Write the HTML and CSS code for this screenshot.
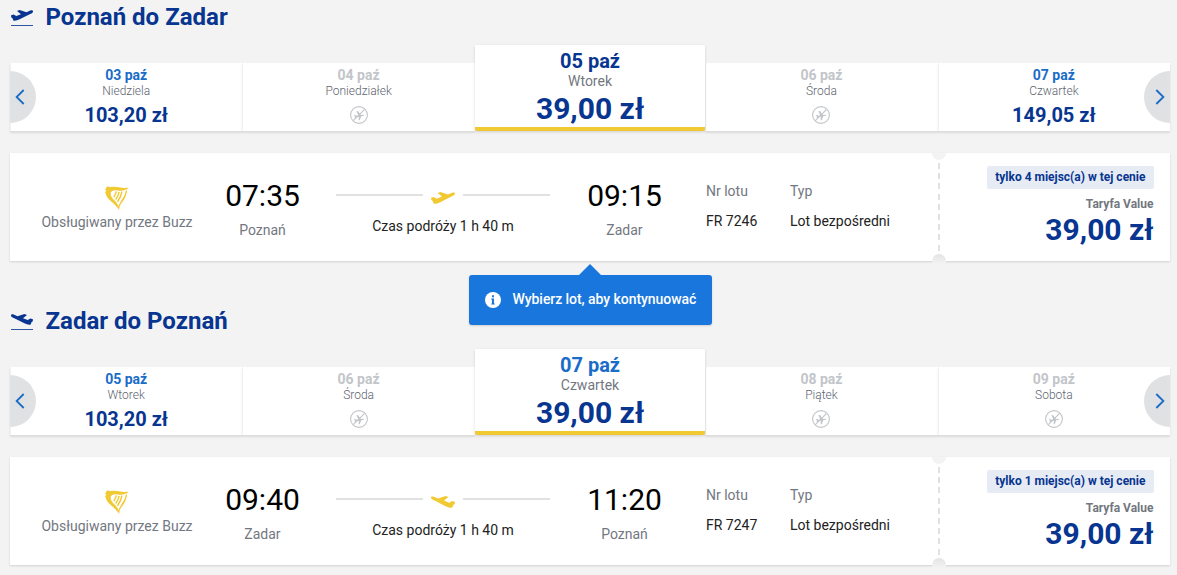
FILE: index.html
```
<!DOCTYPE html>
<html lang="pl">
<head>
  <meta charset="UTF-8">
  <meta name="viewport" content="width=device-width, initial-scale=1">
  <title>Wybierz lot</title>
  <link rel="stylesheet" href="styles.css">
</head>
<body>
  <!-- Wspólne ikony -->
  <svg class="icon-defs" width="0" height="0">
    <symbol id="plane" viewBox="0 0 22 11">
      <path d="M.1 5.300 2.600 4.600 5.300 6.100 10 4.200 6 1 8.600.1 15.500 2.300 19.300.6C20.900 0 22.200.5 22 1.700 21.900 2.800 20.300 3.500 18.700 4.200L8.600 9.300C6.400 10.400 3.600 11.300 2.300 10.400L1.500 8.200.2 7.200z"/>
    </symbol>
    <symbol id="no-flight" viewBox="0 0 18 18">
      <circle cx="9" cy="9" r="8.400" fill="none" stroke="#c2c5ca" stroke-width="1.100"/>
      <path d="M4 8.300 5 8.300 6 9.300H8.300L7 5H8.400L11 9.200 13.600 9.500 14 10 13.500 10.500 11 10.500 9 14.200H7.800L8.700 10.700 6 10.700 5 11.600H4.200L4.700 10z" fill="#c2c5ca" transform="rotate(-8 9 9)"/>
      <path d="M3.300 14.700 14.700 3.300" fill="none" stroke="#c2c5ca" stroke-width="1.100"/>
    </symbol>
    <symbol id="harp" viewBox="0 0 24 24">
      <path d="M1 2C1.500.5 3.800-.1 5 1.200 8 .2 11 .8 14 1.300 17 2.100 20.500 1.900 23.700 1.800 21.500 4 18 5.300 12.500 4.400 9 3.900 7 4.700 5.800 6.600 5.200 9.500 7 12.300 9.600 14.500 12 17 13.200 19 13.700 20.500 14 17 17.700 13.500 19.800 8.500L20.800 4.800 22.200 4.300C21.300 9.500 19.700 13.500 16.900 16.500 15 18.600 14.300 21 14.200 24 12 20.500 9 18 6 15.300 3 12.600.6 9.300.3 6.200L1.300 4.600.2 4z"/>
      <path d="M11.400 5.300Q10.800 8 8.800 11.200M14.200 5.800Q13.200 10 10.700 13.500M17 5.500Q16 11 12.500 15.800" fill="none" stroke="#f1c933" stroke-width="1.400"/>
    </symbol>
  </svg>

  <!-- Lot tam -->
  <section class="journey">
    <header class="journey-header">
      <span class="journey-icon"><svg class="plane"><use href="#plane"/></svg></span>
      <h2>Poznań do Zadar</h2>
    </header>

    <div class="carousel">
      <button class="arrow prev"><svg viewBox="0 0 10 16"><path d="M8.700 1 1.600 8l7.100 7"/></svg></button>
      <div class="day">
        <p class="date">03 paź</p>
        <p class="weekday">Niedziela</p>
        <p class="price">103,20 zł</p>
      </div>
      <div class="day disabled">
        <p class="date">04 paź</p>
        <p class="weekday">Poniedziałek</p>
        <svg class="no-flight"><use href="#no-flight"/></svg>
      </div>
      <div class="day selected dark">
        <p class="date">05 paź</p>
        <p class="weekday">Wtorek</p>
        <p class="price">39,00 zł</p>
      </div>
      <div class="day disabled">
        <p class="date">06 paź</p>
        <p class="weekday">Środa</p>
        <svg class="no-flight"><use href="#no-flight"/></svg>
      </div>
      <div class="day">
        <p class="date">07 paź</p>
        <p class="weekday">Czwartek</p>
        <p class="price">149,05 zł</p>
      </div>
      <button class="arrow next"><svg viewBox="0 0 10 16"><path d="M1.300 1 8.400 8l-7.100 7"/></svg></button>
    </div>

    <div class="flight-card">
      <div class="operator">
        <svg class="harp"><use href="#harp"/></svg>
        <p>Obsługiwany przez Buzz</p>
      </div>
      <div class="stop">
        <p class="time">07:35</p>
        <p class="city">Poznań</p>
      </div>
      <div class="duration">
        <div class="route"><svg class="plane"><use href="#plane"/></svg></div>
        <p>Czas podróży 1 h 40 m</p>
      </div>
      <div class="stop">
        <p class="time">09:15</p>
        <p class="city">Zadar</p>
      </div>
      <div class="info number">
        <p class="label">Nr lotu</p>
        <p>FR 7246</p>
      </div>
      <div class="info">
        <p class="label">Typ</p>
        <p>Lot bezpośredni</p>
      </div>
      <div class="fare">
        <span class="badge">tylko 4 miejsc(a) w tej cenie</span>
        <p class="fare-name">Taryfa Value</p>
        <p class="fare-price">39,00 zł</p>
      </div>
      <div class="tooltip">
        <svg viewBox="0 0 16 16"><circle cx="8" cy="8" r="8" fill="#fff"/><path d="M7 3.200h2v2H7zM6.300 6.600H9v4.800h.8v1.200H6.300v-1.200H7V7.800h-.7z" fill="#1976dc"/></svg>
        <span>Wybierz lot, aby kontynuować</span>
      </div>
    </div>
  </section>

  <!-- Lot powrotny -->
  <section class="journey return">
    <header class="journey-header">
      <span class="journey-icon"><svg class="plane"><use href="#plane"/></svg></span>
      <h2>Zadar do Poznań</h2>
    </header>

    <div class="carousel">
      <button class="arrow prev"><svg viewBox="0 0 10 16"><path d="M8.700 1 1.600 8l7.100 7"/></svg></button>
      <div class="day">
        <p class="date">05 paź</p>
        <p class="weekday">Wtorek</p>
        <p class="price">103,20 zł</p>
      </div>
      <div class="day disabled">
        <p class="date">06 paź</p>
        <p class="weekday">Środa</p>
        <svg class="no-flight"><use href="#no-flight"/></svg>
      </div>
      <div class="day selected">
        <p class="date">07 paź</p>
        <p class="weekday">Czwartek</p>
        <p class="price">39,00 zł</p>
      </div>
      <div class="day disabled">
        <p class="date">08 paź</p>
        <p class="weekday">Piątek</p>
        <svg class="no-flight"><use href="#no-flight"/></svg>
      </div>
      <div class="day disabled">
        <p class="date">09 paź</p>
        <p class="weekday">Sobota</p>
        <svg class="no-flight"><use href="#no-flight"/></svg>
      </div>
      <button class="arrow next"><svg viewBox="0 0 10 16"><path d="M1.300 1 8.400 8l-7.100 7"/></svg></button>
    </div>

    <div class="flight-card">
      <div class="operator">
        <svg class="harp"><use href="#harp"/></svg>
        <p>Obsługiwany przez Buzz</p>
      </div>
      <div class="stop">
        <p class="time">09:40</p>
        <p class="city">Zadar</p>
      </div>
      <div class="duration">
        <div class="route"><svg class="plane"><use href="#plane"/></svg></div>
        <p>Czas podróży 1 h 40 m</p>
      </div>
      <div class="stop">
        <p class="time">11:20</p>
        <p class="city">Poznań</p>
      </div>
      <div class="info number">
        <p class="label">Nr lotu</p>
        <p>FR 7247</p>
      </div>
      <div class="info">
        <p class="label">Typ</p>
        <p>Lot bezpośredni</p>
      </div>
      <div class="fare">
        <span class="badge">tylko 1 miejsc(a) w tej cenie</span>
        <p class="fare-name">Taryfa Value</p>
        <p class="fare-price">39,00 zł</p>
      </div>
    </div>
  </section>
</body>
</html>
```

FILE: styles.css
```
* {
  box-sizing: border-box;
  margin: 0;
  padding: 0;
}

body {
  height: 575px;
  padding: 0 7px 0 10px;
  overflow: hidden;
  background-color: #f3f3f3;
  font-family: Roboto, Arial, sans-serif;
  font-size: 14px;
  color: #000;
}

.icon-defs {
  position: absolute;
}

.journey {
  height: 304px;
}

.journey.return {
  height: 271px;
}

/* Nagłówek */
.journey-header {
  display: flex;
  height: 45px;
  color: #073590;
}

.journey-icon {
  width: 22px;
  height: 26px;
  margin: 0 12.500px 0 1px;
  padding-top: 10px;
  border-bottom: 1px solid #2d58a8;
}

.journey-icon .plane {
  display: block;
  width: 22px;
  height: 11px;
  fill: #073590;
}

.journey-header h2 {
  font-size: 24px;
  font-weight: 700;
  line-height: 34px;
}

.return .plane {
  transform: scaleX(-1);
}

/* Karuzela z datami */
.carousel {
  position: relative;
  display: flex;
  align-items: flex-end;
  height: 86px;
  margin-bottom: 22px;
}

.day {
  display: flex;
  flex: 1;
  flex-direction: column;
  align-items: center;
  height: 68px;
  padding: 4px 1px 0 0;
  background-color: #fff;
  border-left: 1px solid #f1f1f1;
  box-shadow: 0 2px 2px rgba(0, 0, 0, 0.1);
}

.day .date {
  font-weight: 700;
  line-height: 16px;
  color: #1a6cc9;
}

.day .weekday {
  font-size: 12px;
  font-weight: 300;
  line-height: 16px;
  color: #5d6470;
}

.day .price {
  margin-top: 4px;
  font-size: 20px;
  font-weight: 700;
  line-height: 24px;
  color: #073590;
}

.day.disabled .date {
  color: #c2c5ca;
}

.no-flight {
  width: 18px;
  height: 18px;
  margin-top: 7px;
}

.day.selected {
  z-index: 1;
  height: 86px;
  padding-right: 0;
  border-bottom: 4px solid #f1c933;
  border-left: 0;
  border-radius: 0 0 2px 2px;
  box-shadow: 0 1px 3px rgba(0, 0, 0, 0.15);
}

.day.selected .date {
  font-size: 20px;
  line-height: 24px;
}

.day.selected.dark .date {
  color: #073590;
}

.day.selected .weekday {
  font-size: 14px;
  font-weight: 400;
  color: #73777f;
}

.day.selected .price {
  margin-top: 0;
  font-size: 30px;
  line-height: 39px;
}

.arrow {
  position: absolute;
  bottom: 8px;
  z-index: 2;
  display: flex;
  align-items: center;
  width: 26px;
  height: 52px;
  border: 0;
  background-color: #e0e1e3;
}

.arrow svg {
  width: 10px;
  height: 16px;
  fill: none;
  stroke: #1a6cc9;
  stroke-width: 1.800;
}

.arrow.prev {
  left: 0;
  padding-left: 5px;
  border-radius: 0 26px 26px 0;
}

.arrow.next {
  right: 0;
  padding-left: 11px;
  border-radius: 26px 0 0 26px;
}

/* Karta lotu */
.flight-card {
  position: relative;
  display: flex;
  height: 108px;
  background-color: #fff;
  box-shadow: 0 1px 2px rgba(0, 0, 0, 0.14);
}

.operator {
  width: 214px;
  padding-top: 33px;
  text-align: center;
  color: #73777f;
}

.harp {
  display: block;
  width: 24px;
  height: 24px;
  margin: 0 auto 4px;
  fill: #f1c933;
}

.stop {
  width: 77px;
  padding-top: 24px;
  text-align: center;
}

.stop .time {
  font-size: 30px;
  line-height: 37px;
}

.stop .city {
  margin-top: 8px;
  line-height: 16px;
  color: #73777f;
}

.duration {
  width: 285px;
  padding: 37px 36px 0 35px;
  text-align: center;
}

.route {
  display: flex;
  align-items: center;
  gap: 8px;
  height: 14px;
  margin-bottom: 14px;
}

.route::before,
.route::after {
  content: "";
  flex: 1;
  height: 2px;
  margin-top: -4px;
  background-color: #e0e1e1;
}

.route .plane {
  width: 24px;
  height: 12px;
  margin-top: 1px;
  fill: #f1c933;
}

.info {
  padding-top: 30px;
  line-height: 16px;
}

.info.number {
  width: 84px;
  margin-left: 43px;
}

.info .label {
  margin-bottom: 14px;
  color: #73777f;
}

.duration p,
.info p:last-child {
  color: #222;
}

.fare {
  position: relative;
  display: flex;
  flex-direction: column;
  align-items: flex-end;
  width: 231px;
  margin-left: auto;
  padding: 13px 16px 0 0;
}

.fare::before {
  content: "";
  position: absolute;
  top: 10px;
  left: -1px;
  width: 2px;
  height: 88px;
  background: repeating-linear-gradient(#e0e1e1 0 6px, #fff 6px 10.200px);
}

/* Wycięcia biletu */
.flight-card::before,
.flight-card::after {
  content: "";
  position: absolute;
  right: 224px;
  z-index: 1;
  width: 14px;
  height: 7px;
  background-color: #f3f3f3;
}

.flight-card::before {
  top: 0;
  border-radius: 0 0 7px 7px;
}

.flight-card::after {
  bottom: -3px;
  height: 10px;
  border-radius: 7px 7px 0 0;
  background: linear-gradient(#e4e4e4, #f3f3f3);
}

.badge {
  padding: 0 8.500px 0 8px;
  border-radius: 2px;
  background-color: #e6ebf4;
  font-size: 12px;
  font-weight: 700;
  line-height: 23px;
  color: #073590;
}

.fare-name {
  margin: 7px 0.500px 0 0;
  font-size: 12px;
  font-weight: 700;
  line-height: 16px;
  color: #73777f;
}

.fare-price {
  margin-right: 0.500px;
  font-size: 30px;
  font-weight: 700;
  line-height: 35px;
  color: #073590;
}

.tooltip {
  position: absolute;
  top: 122px;
  left: 459px;
  z-index: 3;
  display: flex;
  align-items: center;
  gap: 11.500px;
  width: 243px;
  height: 50px;
  padding-left: 16px;
  border-radius: 3px;
  background-color: #1976dc;
  box-shadow: 0 1px 2px rgba(0, 0, 0, 0.15);
  font-weight: 500;
  letter-spacing: -0.060px;
  color: #fff;
  white-space: nowrap;
}

.tooltip::before {
  content: "";
  position: absolute;
  top: -11px;
  left: 110px;
  border: 11px solid transparent;
  border-top: 0;
  border-bottom-color: #1976dc;
}

.tooltip svg {
  width: 16px;
  height: 16px;
}

.tooltip span {
  margin-bottom: 2px;
}
```
